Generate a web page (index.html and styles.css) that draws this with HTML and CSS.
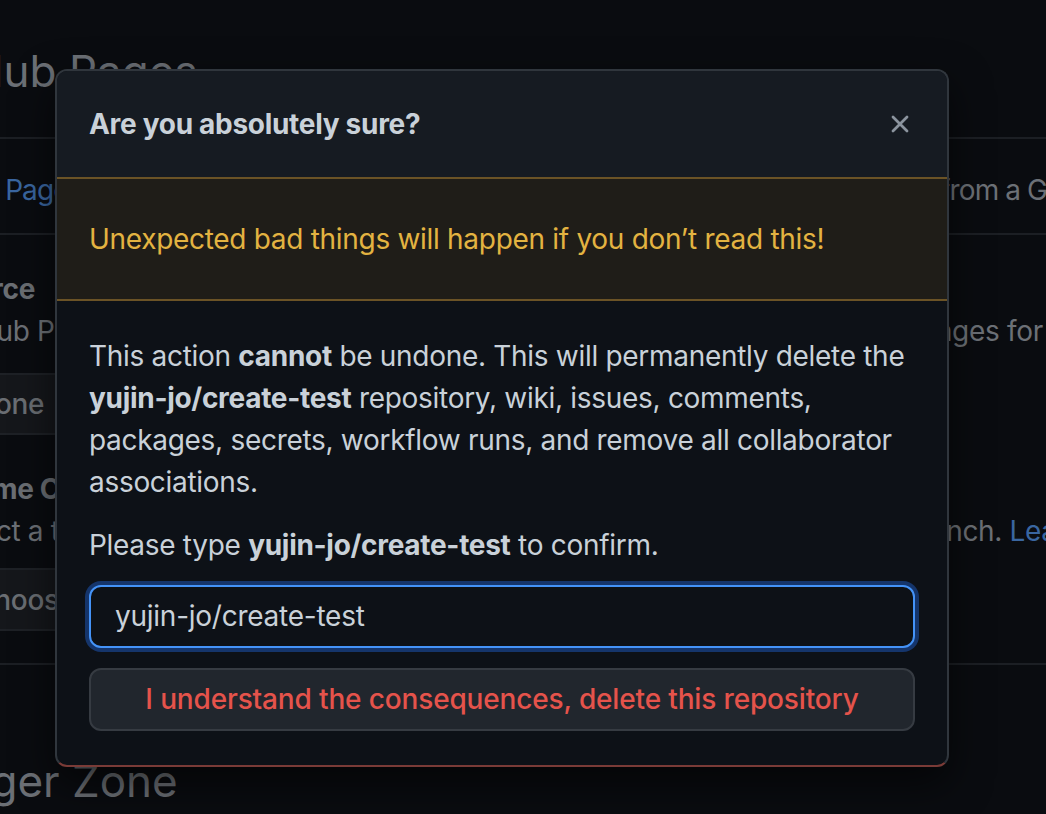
FILE: index.html
```html
<!DOCTYPE html>
<html lang="en">
<head>
<meta charset="utf-8">
<title>Delete repository</title>
<link rel="stylesheet" href="styles.css">
</head>
<body>
<main class="page">
  <div class="subhead"><h2 class="subhead-title pages-title">GitHub Pages</h2></div>
  <div class="intro-row">Your <a class="link">Pages</a> site is designed to host your personal, organization, or project pages from a GitHub repository.</div>
  <section class="settings-box">
    <h4 class="setting-title">Source</h4>
    <p class="setting-desc">GitHub Pages is currently disabled. Select a source below to enable GitHub Pages for this repository. <a class="link">Learn more</a>.</p>
    <button class="btn select-btn">None</button>
    <h4 class="setting-title">Theme Chooser</h4>
    <p class="setting-desc theme-desc">Select a theme to publish your site with a Jekyll theme using the gh-pages branch. <a class="link">Learn more</a>.</p>
    <button class="btn theme-btn">Choose a theme</button>
  </section>
  <h2 class="subhead-title danger-title">Danger Zone</h2>
</main>

<div class="dialog" role="dialog">
  <header class="dialog-header">
    <h3 class="dialog-title">Are you absolutely sure?</h3>
    <button class="close-btn" aria-label="Close">
      <svg width="18" height="18" viewBox="0 0 18 18"><path d="M2 2 L16 16 M16 2 L2 16" stroke="currentColor" stroke-width="2.8" stroke-linecap="round" fill="none"/></svg>
    </button>
  </header>
  <div class="flash-warn">Unexpected bad things will happen if you don’t read this!</div>
  <div class="dialog-body">
    <p class="body-text">This action <strong>cannot</strong> be undone. This will permanently delete the <strong>yujin-jo/create-test</strong> repository, wiki, issues, comments, packages, secrets, workflow runs, and remove all collaborator associations.</p>
    <p class="body-text confirm-text">Please type <strong>yujin-jo/create-test</strong> to confirm.</p>
    <input class="confirm-input" type="text" value="yujin-jo/create-test">
    <button class="danger-btn">I understand the consequences, delete this repository</button>
  </div>
</div>
</body>
</html>
```

FILE: styles.css
```css
html, body {
  margin: 0;
  padding: 0;
}
body {
  width: 1046px;
  height: 814px;
  overflow: hidden;
  background: #0a0c10;
  font-family: "Inter", "Liberation Sans", sans-serif;
  color: #6c7076;
  position: relative;
}

/* dimmed background page */
.page {
  margin-left: -92px;
  width: 1300px;
  white-space: nowrap;
  letter-spacing: -0.3px;
}
.subhead {
  padding-top: 41px;
  padding-bottom: 36px;
  border-bottom: 2px solid #1c1f24;
}
.subhead-title {
  margin: 0;
  font-size: 44px;
  line-height: 60px;
  font-weight: 400;
  letter-spacing: 0;
  color: #6c7076;
}
.pages-title {
  padding-left: 5px;
}
.intro-row {
  padding: 30px 0 22px 33px;
  font-size: 28px;
  line-height: 42px;
  letter-spacing: -0.9px;
  border-bottom: 2px solid #1c1f24;
}
.link {
  color: #3a66a0;
}
.settings-box {
  padding: 33px 0 32px 32px;
  border-bottom: 2px solid #1c1f24;
  display: flex;
  flex-direction: column;
  align-items: flex-start;
}
.setting-title {
  margin: 0;
  font-size: 28px;
  line-height: 42px;
  font-weight: 700;
  color: #6a6e73;
}
.setting-desc {
  margin: 0 0 21px 0;
  font-size: 28px;
  line-height: 42px;
}
.theme-desc {
  letter-spacing: -0.37px;
}
.btn {
  font-family: inherit;
  font-size: 28px;
  line-height: 42px;
  font-weight: 500;
  letter-spacing: -0.3px;
  color: #6a6e73;
  background: #15171b;
  border: 2px solid #1e2126;
  border-radius: 12px;
  padding: 8px 32px;
  width: 220px;
  text-align: left;
}
.select-btn {
  margin-bottom: 33px;
}
.theme-btn {
  margin-top: -5px;
  padding: 8.5px 32px;
}
.danger-title {
  margin-top: 86px;
}

/* dialog */
.dialog {
  position: absolute;
  left: 55px;
  top: 69px;
  width: 894px;
  box-sizing: border-box;
  background: #0d1117;
  border: 2px solid #30363d;
  border-bottom-color: #7a3b37;
  border-radius: 12px;
  overflow: hidden;
  box-shadow: 0 16px 40px rgba(0, 0, 0, 0.6);
  color: #c9d1d9;
  letter-spacing: -0.3px;
}
.dialog-header {
  background: #161b22;
  padding: 32px;
  display: flex;
  justify-content: space-between;
  align-items: center;
}
.dialog-title {
  margin: 0;
  font-size: 28px;
  line-height: 42px;
  font-weight: 700;
  color: #c9d1d9;
}
.close-btn {
  background: none;
  border: 0;
  padding: 0;
  margin-right: 6px;
  color: #8b949e;
  display: flex;
}
.flash-warn {
  background: #1f1d18;
  border-top: 2px solid #6b5326;
  border-bottom: 2px solid #6b5326;
  padding: 39px 32px;
  font-size: 28px;
  line-height: 42px;
  color: #e3b341;
}
.dialog-body {
  padding: 34px 32px 34px;
  display: flex;
  flex-direction: column;
}
.body-text {
  margin: 0 0 21px 0;
  font-size: 28px;
  line-height: 42px;
  color: #c9d1d9;
}
.confirm-text {
  margin-bottom: 19px;
}
.body-text strong {
  font-weight: 700;
}
.confirm-input {
  font-family: inherit;
  font-size: 28px;
  line-height: 43px;
  letter-spacing: -0.25px;
  padding: 8px 24px;
  color: #c9d1d9;
  background: #0d1117;
  border: 2px solid #4493f8;
  border-radius: 12px;
  box-shadow: 0 0 0 4px #15356b;
  outline: none;
  margin: 0;
}
.danger-btn {
  margin-top: 20px;
  font-family: inherit;
  font-size: 28px;
  line-height: 43px;
  font-weight: 500;
  letter-spacing: -0.15px;
  padding: 8px 24px;
  color: #e5534b;
  background: #21262d;
  border: 2px solid #363b42;
  border-radius: 12px;
  text-align: center;
}
```
